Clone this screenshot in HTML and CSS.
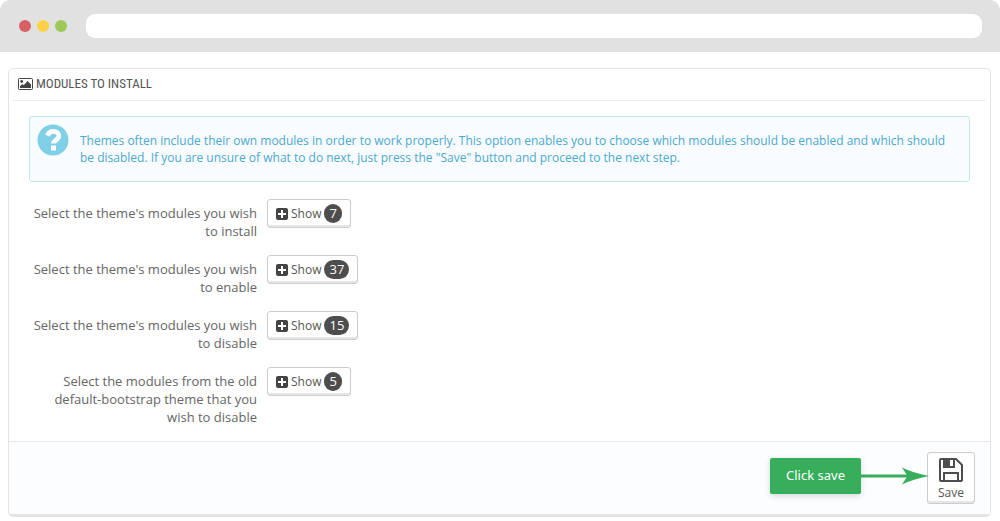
FILE: index.html
```html
<!DOCTYPE html>
<html lang="en">

<head>
    <meta charset="UTF-8">
    <meta name="viewport" content="width=device-width, initial-scale=1.0">
    <title>Modules to install</title>
    <link rel="stylesheet" href="styles.css">
</head>

<body>
    <header class="browser-bar">
        <span class="dot red"></span>
        <span class="dot yellow"></span>
        <span class="dot green"></span>
        <input type="text" class="address" aria-label="Address">
    </header>

    <form class="panel">
        <h3 class="panel-heading">
            <svg width="15" height="12" viewBox="0 0 15 12" aria-hidden="true">
                <rect x="0.5" y="0.5" width="14" height="11" rx="1" fill="#fff" stroke="#444" />
                <circle cx="3.7" cy="3.5" r="1.4" fill="#444" />
                <path d="M2 10V8.200l2.300-2.200 1.400 1.300L9.600 3 13 6.400V10z" fill="#444" />
            </svg>
            Modules to install
        </h3>

        <div class="panel-body">
            <div class="alert">
                <svg class="alert-icon" width="32" height="32" viewBox="0 0 32 32" aria-hidden="true">
                    <circle cx="16" cy="16" r="15.5" fill="#7fcfe6" />
                    <path d="M10.400 11.600C11.400 9 13.300 7.400 16.200 7.400c3.200 0 5.600 1.700 5.600 4.700 0 3.800-5.200 4-5.200 7.300" fill="none" stroke="#fff" stroke-width="4.800" />
                    <rect x="14" y="21.500" width="5" height="5" fill="#fff" />
                </svg>
                <p>Themes often include their own modules in order to work properly. This option enables you to choose which modules should be enabled and which should be disabled. If you are unsure of what to do next, just press the "Save" button and proceed to the next step.</p>
            </div>

            <div class="form-group">
                <label for="toInstall">Select the theme's modules you wish to install</label>
                <button type="button" id="toInstall" class="btn">
                    <svg width="12" height="12" viewBox="0 0 12 12" aria-hidden="true">
                        <rect width="12" height="12" rx="2" fill="#444" />
                        <path d="M6 2v8M2 6h8" stroke="#fff" stroke-width="2" />
                    </svg>
                    Show <span class="badge">7</span>
                </button>
            </div>

            <div class="form-group">
                <label for="toEnable">Select the theme's modules you wish to enable</label>
                <button type="button" id="toEnable" class="btn">
                    <svg width="12" height="12" viewBox="0 0 12 12" aria-hidden="true">
                        <rect width="12" height="12" rx="2" fill="#444" />
                        <path d="M6 2v8M2 6h8" stroke="#fff" stroke-width="2" />
                    </svg>
                    Show <span class="badge">37</span>
                </button>
            </div>

            <div class="form-group">
                <label for="toDisable">Select the theme's modules you wish to disable</label>
                <button type="button" id="toDisable" class="btn">
                    <svg width="12" height="12" viewBox="0 0 12 12" aria-hidden="true">
                        <rect width="12" height="12" rx="2" fill="#444" />
                        <path d="M6 2v8M2 6h8" stroke="#fff" stroke-width="2" />
                    </svg>
                    Show <span class="badge">15</span>
                </button>
            </div>

            <div class="form-group">
                <label for="oldModules">Select the modules from the old default-bootstrap theme that you wish to disable</label>
                <button type="button" id="oldModules" class="btn">
                    <svg width="12" height="12" viewBox="0 0 12 12" aria-hidden="true">
                        <rect width="12" height="12" rx="2" fill="#444" />
                        <path d="M6 2v8M2 6h8" stroke="#fff" stroke-width="2" />
                    </svg>
                    Show <span class="badge">5</span>
                </button>
            </div>
        </div>

        <div class="panel-footer">
            <div class="hint">
                <span class="hint-text">Click save</span>
                <svg class="hint-arrow" width="68" height="18" viewBox="0 0 68 18" aria-hidden="true">
                    <path d="M0 9h50" stroke="#36ae5b" stroke-width="3" />
                    <path d="M41 0.500Q52 6 68 9Q52 12 41 17.500L46.500 9z" fill="#36ae5b" />
                </svg>
            </div>
            <button type="submit" class="btn-save">
                <svg width="24" height="24" viewBox="0 0 24 24" fill="none" stroke="#4d4d4d" stroke-width="2" aria-hidden="true">
                    <path d="M1 2q0-1 1-1H17L23 7V22q0 1-1 1H2q-1 0-1-1z" stroke-linejoin="round" />
                    <path d="M5 23V15H19V23M5 1V9H15V1" />
                    <path d="M5 2H11V9H5z" fill="#4d4d4d" stroke="none" />
                </svg>
                Save
            </button>
        </div>
    </form>
</body>

</html>
```
FILE: styles.css
```css
* {
    box-sizing: border-box;
    margin: 0;
    padding: 0;
}

body {
    background: #fff;
    color: #555;
    font-family: "Open Sans", sans-serif;
    font-size: 13px;
    line-height: 18px;
}

.browser-bar {
    display: flex;
    align-items: center;
    gap: 6px;
    height: 52px;
    padding: 0 18px 0 19px;
    background: #e1e1e1;
    border-radius: 10px 10px 0 0;
}

.dot {
    width: 12px;
    height: 12px;
    border-radius: 50%;
}

.red {
    background: #d66062;
}

.yellow {
    background: #ffd147;
}

.green {
    background: #9dc95a;
}

.address {
    flex: 1;
    height: 24px;
    margin-left: 13px;
    padding: 0 12px;
    border: none;
    border-radius: 9px;
    background: #fff;
}

.panel {
    margin: 16px 9px 4px 8px;
    border: 1px solid #e4e4e4;
    border-bottom: 3px solid #e4e4e4;
    border-radius: 5px;
}

.panel-heading {
    display: flex;
    align-items: center;
    gap: 3px;
    height: 32px;
    margin: 0 4px;
    padding: 0 0 1px 5px;
    border-bottom: 1px solid #eee;
    font-family: "Roboto Condensed", "Open Sans", sans-serif;
    font-size: 13px;
    font-weight: normal;
    text-transform: uppercase;
}

.panel-body {
    padding: 15px 20px 0;
}

.alert {
    display: flex;
    gap: 11px;
    min-height: 66px;
    margin-bottom: 17px;
    padding: 7px 20px 7px 7px;
    border: 1px solid #bfe9ee;
    border-radius: 3px;
    background: #f8fcfe;
    color: #4ba9cf;
    font-size: 12px;
    line-height: 17px;
}

.alert-icon {
    flex: none;
}

.alert p {
    padding-top: 8px;
}

.form-group {
    display: grid;
    grid-template-columns: 228px 1fr;
    gap: 10px;
    align-items: start;
    justify-items: start;
    margin-bottom: 15px;
    color: #666;
}

.form-group label {
    justify-self: end;
    padding-top: 5px;
    text-align: right;
}

.btn,
.btn-save {
    border: 1px solid #ccc;
    border-radius: 3px;
    background: #fff;
    box-shadow: inset 0 -2px 0 #e6e6e6;
    color: #555;
    font-family: inherit;
    font-size: 12px;
    cursor: pointer;
}

.btn {
    display: flex;
    align-items: center;
    gap: 3px;
    height: 29px;
    padding: 0 8px;
}

.badge {
    padding: 0 5px;
    border-radius: 10px;
    background: #4d4d4d;
    color: #fff;
    font-size: 13px;
    line-height: 19px;
}

.panel-footer {
    display: flex;
    align-items: center;
    justify-content: flex-end;
    padding: 10px 15px;
    border-top: 1px solid #e8e8ea;
    background: #fcfdfe;
}

.hint {
    display: flex;
    align-items: center;
    margin-bottom: 4px;
}

.hint-text {
    padding: 8px 16px 10px;
    border-radius: 2px;
    background: #36ae5b;
    box-shadow: 0 2px 6px rgba(0, 0, 0, 0.15);
    color: #fff;
    font-family: "Noto Sans", sans-serif;
}

.hint-arrow {
    margin-right: -2px;
    z-index: 1;
}

.btn-save {
    display: flex;
    flex-direction: column;
    align-items: center;
    gap: 2px;
    width: 48px;
    height: 52px;
    padding-top: 5px;
    line-height: 17px;
}
```
